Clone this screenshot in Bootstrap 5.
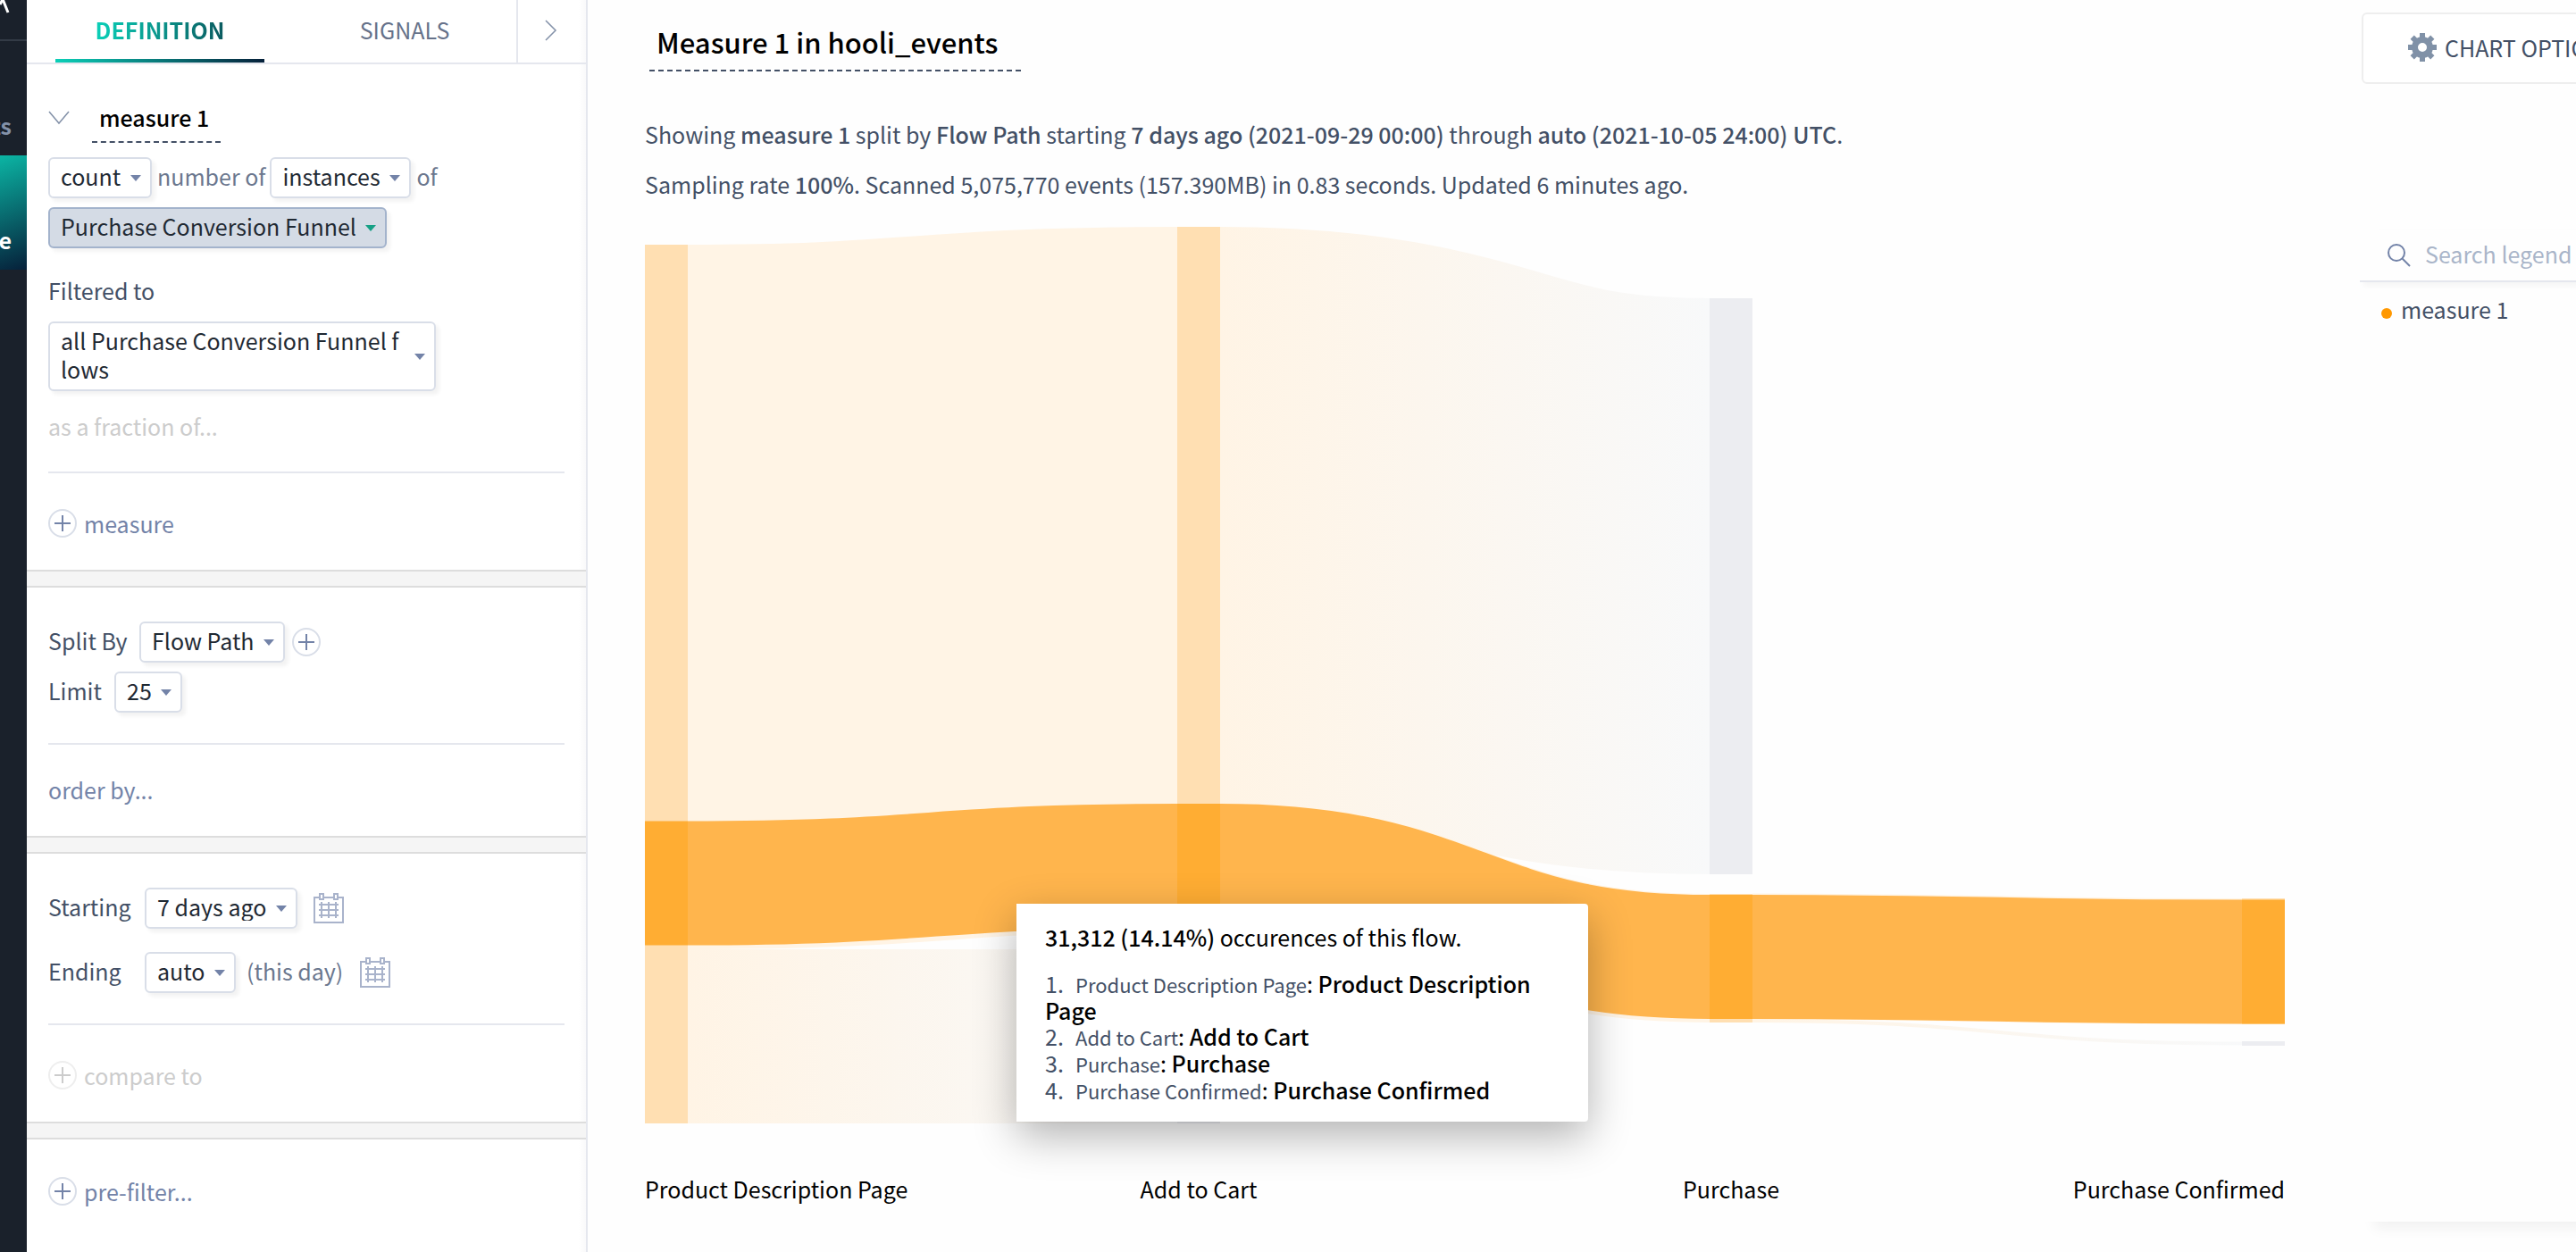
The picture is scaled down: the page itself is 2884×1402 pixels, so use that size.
<!DOCTYPE html>
<html lang="en">
<head>
<meta charset="utf-8">
<meta name="viewport" content="width=device-width, initial-scale=1">
<title>Measure 1 in hooli_events</title>
<link rel="stylesheet" href="https://cdn.jsdelivr.net/npm/bootstrap@5.3.0/dist/css/bootstrap.min.css">
<style>
  :root { --ink:#1f2933; --slate:#435066; --soft:#7383a8; --line:#e5e7ee; }
  body { font-family:"Noto Sans CJK SC","Noto Sans",sans-serif; font-size:25px; line-height:32px; color:var(--slate); background:#fefefe; overflow:hidden; }
  .rail { width:30px; background:#1a212b; min-height:100vh; overflow:hidden; }
  .rail-logo { height:46px; border-bottom:2px solid #333b46; }
  .rail-item { height:128px; padding:78px 17px 0 0; direction:rtl; font-weight:700; white-space:nowrap; color:#8391a8; text-decoration:none; }
  .rail-item.on { color:#fff; background:linear-gradient(160deg,#0bb5a4,#06203a); }
  .panel { width:628px; border-right:2px solid var(--line); background:#fff linear-gradient(to left,#f9f9fa,#fff 8px); }
  .tabs { height:72px; border-bottom:2px solid var(--line); padding-left:32px; }
  .tab { border:0; background:none; height:70px; padding:0; color:var(--slate); }
  .tab-def { width:234px; font-weight:700; border-bottom:4px solid; border-image:linear-gradient(to right,#0bd0b8,#06203a) 1; }
  .tab-def span { background:linear-gradient(to right,#0bd0b8,#0a5a5f); -webkit-background-clip:text; background-clip:text; color:transparent; }
  .tab-sig { width:282px; padding:0 0 4px 32px; color:#66728a; }
  .tab-more { width:76px; padding-bottom:10px; border-left:2px solid var(--line); }
  .sect { padding:38px 24px 36px; }
  .sect-first { padding-top:32px; }
  .gutter-bar { height:20px; background:#f5f5f5; border:solid #ddd; border-width:2px 0; }
  .rule { height:2px; background:var(--line); opacity:1; border:0; margin:0; }
  .pick { width:auto; height:46px; font-size:25px; line-height:32px; padding:0 32px 4px 12px; border:2px solid #d9dee8; border-radius:6px; color:var(--ink); box-shadow:4px 4px 4px #0000000d;
    background:#fff url("data:image/svg+xml,%3Csvg xmlns='http://www.w3.org/2000/svg' viewBox='0 0 12 7'%3E%3Cpath fill='%237383a8' d='M0 0h12L6 7z'/%3E%3C/svg%3E") no-repeat right 10px center/12px 7px; }
  .pick.chosen { margin-top:10px; background-color:#d4dbe5; border-color:#a3b3cc;
    background-image:url("data:image/svg+xml,%3Csvg xmlns='http://www.w3.org/2000/svg' viewBox='0 0 12 7'%3E%3Cpath fill='%2316a085' d='M0 0h12L6 7z'/%3E%3C/svg%3E"); }
  .pick-tall { width:434px; height:78px; padding:3px 33px 7px 12px; text-align:left; word-break:break-all; }
  .thin { color:#6b778e; padding:0 5px 4px 6px; }
  .name-box { border:0; border-bottom:2px dashed var(--slate); border-radius:0; background:none; color:#000; font-weight:500; padding:0 8px; }
  .name-sm { width:144px; height:56px; margin-left:25px; }
  .name-lg { width:416px; height:80px; padding-top:14px; font-size:31px; margin-left:5px; }
  .act { border:0; background:none; padding:0; color:var(--soft); gap:8px; }
  .act:disabled { color:#ccc; }
  .act svg, .cal { display:block; flex:none; }
  .act-add { margin-top:40px; }
  .act-order { margin-top:34px; }
  .act-frac { margin:23px 0 35px; }
  .filter-label { margin:31px 0 19px; }
  .row-limit { margin:10px 0 34px; }
  .row-end { margin:26px 0 34px; }
  .lab { padding-bottom:4px; }
  .lab-split { width:102px; }
  .lab-limit { width:74px; }
  .lab-date { width:108px; }
  .cal { margin-left:18px; }
  .thin + .cal { margin-left:14px; }
  .row-end .thin { padding-left:12px; }
  .summary { line-height:56px; color:var(--slate); }
  .summary-first { margin-top:42px; }
  .summary b, .tip b { font-weight:500; }
  .chart-col { padding-left:64px; }
  .chart-svg { display:block; width:100%; }
  .chart-svg text { font-size:25px; fill:#000; }
  .tip { left:416px; top:778px; width:640px; padding:21px 32px 20px; background:#fff; color:#000; border-radius:0 4px 4px 0; box-shadow:0 16px 48px #0000004d; }
  .tip ol { list-style:none; margin:0; padding:22px 0 0; line-height:29px; }
  .tip li span { font-size:22px; color:var(--slate); }
  .tip li i { font-style:normal; color:var(--slate); display:inline-block; width:34px; }
  .side { width:242px; margin-left:84px; overflow:hidden; }
  .opt { width:290px; height:80px; margin:14px 0 0 2px; padding:0 0 3px 50px; border:2px solid #eee; border-radius:6px; background:#fff; color:var(--slate); gap:9px; }
  .legend-box { margin-top:164px; width:290px; height:calc(100vh - 292px); box-shadow:16px 8px 14px #0000000d; }
  .find { height:58px; padding-left:31px; gap:16px; border-bottom:2px solid var(--line); box-shadow:4px 4px 6px #0000000a; }
  .find svg { flex:none; }
  .find input { border:0; background:none; padding:0 0 4px; color:var(--slate); font-size:25px; width:190px; }
  .find input::placeholder { color:#a9b5c9; opacity:1; }
  .key { padding:14px 0 0 24px; gap:10px; }
  .dot { width:12px; height:12px; border-radius:50%; background:#ff9800; margin-top:10px; }
</style>
</head>
<body>
<div class="d-flex">
  <nav class="rail flex-shrink-0" aria-label="Main">
    <div class="rail-logo"><svg class="d-block" width="30" height="16" viewBox="0 0 30 16"><path d="M0 5 3 -1l6 15" fill="none" stroke="#fff" stroke-width="3"/></svg></div>
    <a href="#" class="rail-item d-block">Insights</a>
    <a href="#" class="rail-item on d-block">Explore</a>
  </nav>

  <aside class="panel flex-shrink-0">
    <div class="tabs d-flex">
      <button class="tab tab-def" type="button"><span>DEFINITION</span></button>
      <button class="tab tab-sig" type="button">SIGNALS</button>
      <button class="tab tab-more" type="button" aria-label="Collapse"><svg width="14" height="24" viewBox="0 0 14 24"><path d="M1 1l11 11L1 23" fill="none" stroke="#8391a8" stroke-width="1.5"/></svg></button>
    </div>

    <section class="sect sect-first">
      <div class="d-flex align-items-center">
        <svg width="24" height="16" viewBox="0 0 24 16"><path d="M1 1l11 13L23 1" fill="none" stroke="#8391a8" stroke-width="1.5"/></svg>
        <input class="name-box name-sm" value="measure 1" aria-label="Measure name">
      </div>
      <div class="d-flex align-items-center mt-3">
        <select class="pick form-select" aria-label="Aggregate"><option>count</option></select>
        <span class="thin">number of</span>
        <select class="pick form-select" aria-label="Unit"><option>instances</option></select>
        <span class="thin">of</span>
      </div>
      <select class="pick form-select chosen" aria-label="Flow"><option>Purchase Conversion Funnel</option></select>
      <div class="filter-label">Filtered to</div>
      <button class="pick pick-tall" type="button">all Purchase Conversion Funnel flows</button>
      <button class="act act-frac d-block" type="button" disabled>as a fraction of...</button>
      <hr class="rule">
      <button class="act act-add d-flex align-items-center" type="button"><svg width="32" height="32" viewBox="0 0 32 32" fill="none" stroke-width="2"><circle cx="16" cy="16" r="15" stroke="#d9dee8"/><path d="M7 16h18M16 7v18" stroke="#7383a8"/></svg>measure</button>
    </section>
    <div class="gutter-bar"></div>

    <section class="sect">
      <div class="d-flex align-items-center">
        <label class="lab lab-split" for="split">Split By</label>
        <select id="split" class="pick form-select"><option>Flow Path</option></select>
        <button class="act ms-2" type="button" aria-label="Add split"><svg width="32" height="32" viewBox="0 0 32 32" fill="none" stroke-width="2"><circle cx="16" cy="16" r="15" stroke="#d9dee8"/><path d="M7 16h18M16 7v18" stroke="#7383a8"/></svg></button>
      </div>
      <div class="row-limit d-flex align-items-center">
        <label class="lab lab-limit" for="limit">Limit</label>
        <select id="limit" class="pick form-select"><option>25</option></select>
      </div>
      <hr class="rule">
      <button class="act act-order d-block" type="button">order by...</button>
    </section>
    <div class="gutter-bar"></div>

    <section class="sect">
      <div class="d-flex align-items-center">
        <label class="lab lab-date" for="start">Starting</label>
        <select id="start" class="pick form-select"><option>7 days ago</option></select>
        <svg class="cal" width="34" height="34" viewBox="0 0 34 34" fill="none" stroke="#a9b3cb" stroke-width="2"><path d="M7 5H1v28h32V5h-6M11 5h12M7 1h4v6H7zM23 1h4v6h-4zM6 13h22M6 19h22M6 25h22M9 10v18M17 10v18M25 10v18"/></svg>
      </div>
      <div class="row-end d-flex align-items-center">
        <label class="lab lab-date" for="end">Ending</label>
        <select id="end" class="pick form-select"><option>auto</option></select>
        <span class="thin">(this day)</span>
        <svg class="cal" width="34" height="34" viewBox="0 0 34 34" fill="none" stroke="#a9b3cb" stroke-width="2"><path d="M7 5H1v28h32V5h-6M11 5h12M7 1h4v6H7zM23 1h4v6h-4zM6 13h22M6 19h22M6 25h22M9 10v18M17 10v18M25 10v18"/></svg>
      </div>
      <hr class="rule">
      <button class="act act-add d-flex align-items-center" type="button" disabled><svg width="32" height="32" viewBox="0 0 32 32" fill="none" stroke-width="2"><circle cx="16" cy="16" r="15" stroke="#eee"/><path d="M7 16h18M16 7v18" stroke="#ccc"/></svg>compare to</button>
    </section>
    <div class="gutter-bar"></div>

    <section class="sect">
      <button class="act d-flex align-items-center mt-1" type="button"><svg width="32" height="32" viewBox="0 0 32 32" fill="none" stroke-width="2"><circle cx="16" cy="16" r="15" stroke="#d9dee8"/><path d="M7 16h18M16 7v18" stroke="#7383a8"/></svg>pre-filter...</button>
    </section>
  </aside>

  <main class="chart-col flex-fill">
    <input class="name-box name-lg d-block" value="Measure 1 in hooli_events" aria-label="Chart title">
    <div class="summary summary-first">Showing <b>measure 1</b> split by <b>Flow Path</b> starting <b>7 days ago (2021-09-29 00:00)</b> through <b>auto (2021-10-05 24:00) UTC</b>.</div>
    <div class="summary">Sampling rate <b>100%</b>. Scanned 5,075,770 events (157.390MB) in 0.83 seconds. Updated 6 minutes ago.</div>
    <div class="position-relative">
      <svg class="chart-svg" viewBox="722 234 1836 1166" role="img" aria-label="Flow chart">
        <defs>
          <linearGradient id="g1" gradientUnits="userSpaceOnUse" x1="770" x2="1318" y1="0" y2="0"><stop stop-color="#fff4e5"/><stop offset="1" stop-color="#f8f9fa"/></linearGradient>
          <linearGradient id="g2" gradientUnits="userSpaceOnUse" x1="1366" x2="1914" y1="0" y2="0"><stop stop-color="#fff4e5"/><stop offset="1" stop-color="#f8f9fa"/></linearGradient>
          <linearGradient id="g3" gradientUnits="userSpaceOnUse" x1="1962" x2="2510" y1="0" y2="0"><stop stop-color="#fff4e5"/><stop offset="1" stop-color="#f8f9fa"/></linearGradient>
        </defs>
        <g fill="none">
          <path d="M770 668.5C1044 668.5 1044 648.5 1318 648.5" stroke="#fff4e5" stroke-width="789"/>
          <path d="M770 1063H1318V1258H770z" fill="url(#g1)"/>
          <path d="M1366 576.5C1640 576.5 1640 656.5 1914 656.5" stroke="url(#g2)" stroke-width="645"/>
          <path d="M1366 971C1640 971 1640 1073 1914 1073" stroke="#fff4e5" stroke-width="144"/>
          <path d="M1962 1071C2236 1071 2236 1076.500 2510 1076.500" stroke="#fff4e5" stroke-width="141"/>
          <path d="M1962 1143C2236 1143 2236 1168.500 2510 1168.500" stroke="url(#g3)" stroke-width="4"/>
        </g>
        <g fill="#ffdfb2"><path d="M722 274h48v984h-48zM1318 254h48v789h-48zM1914 1001h48v144h-48zM2510 1006h48v141h-48z"/></g>
        <path fill="#ecedf1" d="M1318 1063h48v195h-48zM1914 334h48v645h-48zM2510 1166h48v5h-48z"/>
        <g fill="none" stroke="#ffb54d" stroke-width="139">
          <path d="M770 989C1044 989 1044 969.500 1318 969.500"/>
          <path d="M1366 969.500C1640 969.500 1640 1071.500 1914 1071.500"/>
          <path d="M1962 1071.500C2236 1071.500 2236 1077 2510 1077"/>
        </g>
        <path fill="#ffad33" d="M722 919.500h48v139h-48zM1318 900h48v139h-48zM1914 1002h48v139h-48zM2510 1007.500h48v139h-48z"/>
        <text x="722" y="1342">Product Description Page</text>
        <text x="1342" y="1342" text-anchor="middle">Add to Cart</text>
        <text x="1938" y="1342" text-anchor="middle">Purchase</text>
        <text x="2558" y="1342" text-anchor="end">Purchase Confirmed</text>
      </svg>
      <div class="tip position-absolute">
        <div><b>31,312 (14.14%)</b> occurences of this flow.</div>
        <ol>
          <li><i>1.</i><span>Product Description Page</span>: <b>Product Description Page</b></li>
          <li><i>2.</i><span>Add to Cart</span>: <b>Add to Cart</b></li>
          <li><i>3.</i><span>Purchase</span>: <b>Purchase</b></li>
          <li><i>4.</i><span>Purchase Confirmed</span>: <b>Purchase Confirmed</b></li>
        </ol>
      </div>
    </div>
  </main>

  <aside class="side flex-shrink-0">
    <button class="opt d-flex align-items-center text-nowrap" type="button"><svg width="32" height="32" viewBox="-16 -16 32 32" fill="#8091a7"><path fill-rule="evenodd" d="M0-12a12 12 0 1 0 0 24a12 12 0 0 0 0-24zM0-5a5 5 0 1 1 0 10a5 5 0 0 1 0-10z"/><path id="teeth" d="M-3-16h6v6h-6zM-3 10h6v6h-6zM-16-3h6v6h-6zM10-3h6v6h-6z"/><use href="#teeth" transform="rotate(45)"/></svg>CHART OPTIONS</button>
    <div class="legend-box">
      <div class="find d-flex align-items-center">
        <svg width="26" height="26" viewBox="0 0 26 26" fill="none" stroke="#7383a8" stroke-width="2"><circle cx="10" cy="10" r="9"/><path d="M16 16l9 9"/></svg>
        <input type="search" placeholder="Search legend" aria-label="Search legend">
      </div>
      <div class="key d-flex align-items-center"><span class="dot"></span>measure 1</div>
    </div>
  </aside>
</div>
<script src="https://cdn.jsdelivr.net/npm/bootstrap@5.3.0/dist/js/bootstrap.bundle.min.js"></script>
</body>
</html>
